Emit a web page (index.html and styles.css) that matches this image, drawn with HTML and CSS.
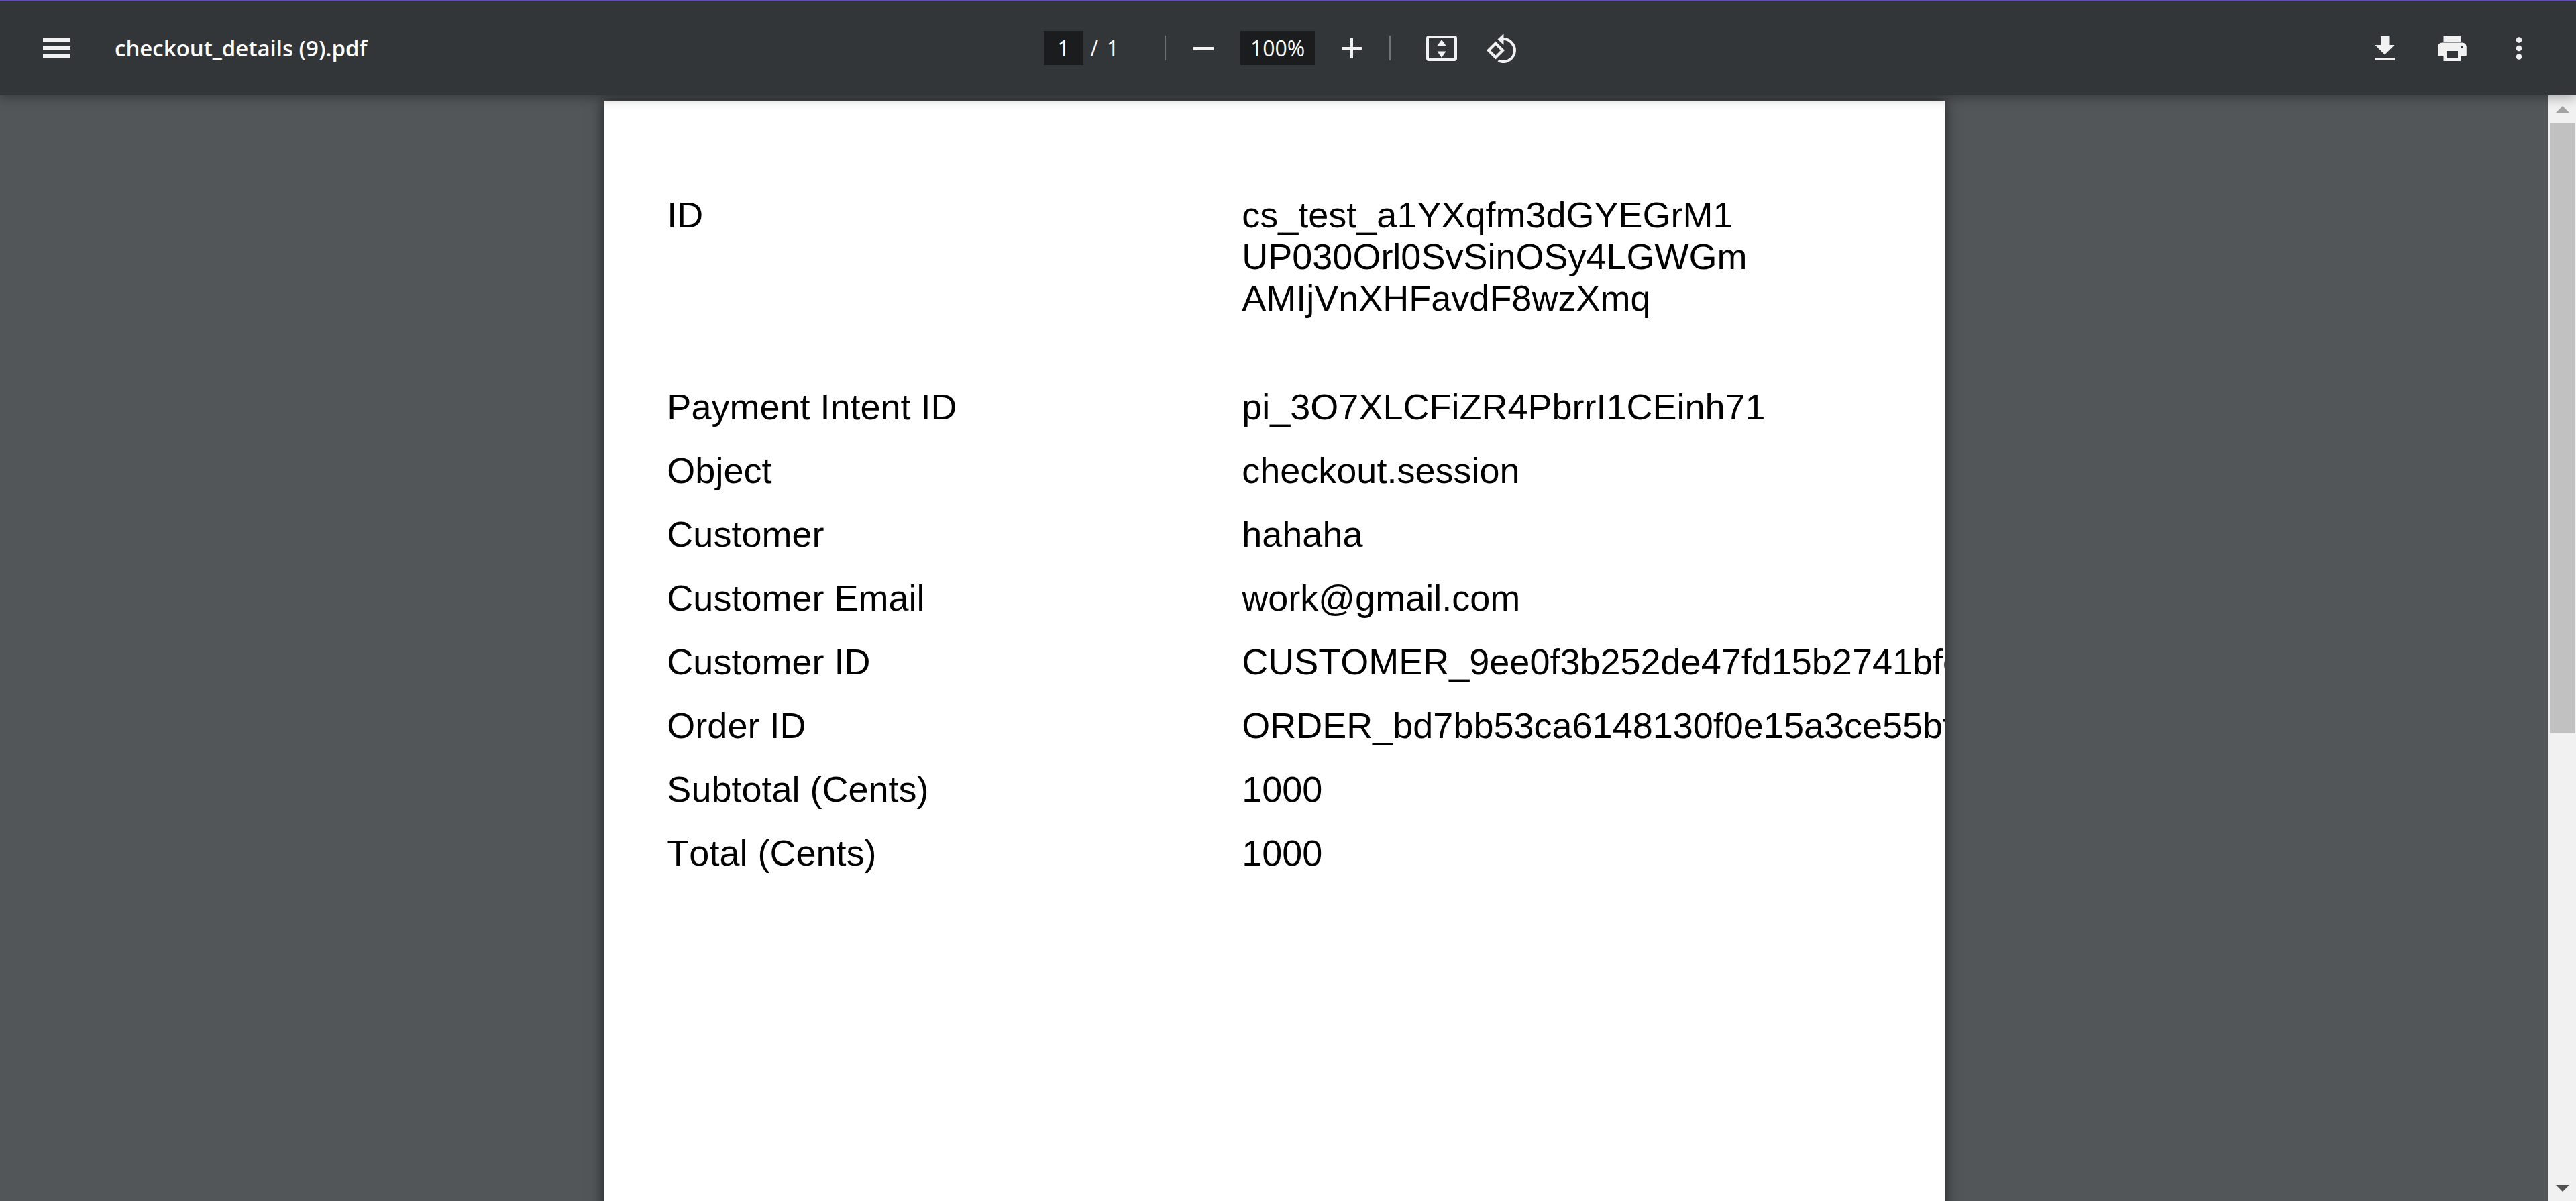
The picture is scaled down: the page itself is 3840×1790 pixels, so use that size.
FILE: index.html
```html
<!DOCTYPE html>
<html lang="en">
<head>
<meta charset="utf-8">
<title>checkout_details (9).pdf</title>
<link rel="stylesheet" href="styles.css">
</head>
<body>
<header class="toolbar">
  <div class="toolbar-start">
    <button class="icon-button" type="button" aria-label="Menu">
      <svg width="42" height="32" viewBox="0 0 42 32"><path d="M0 0h41v6H0zM0 13h41v5H0zM0 25h41v6H0z"/></svg>
    </button>
    <h1 class="title">checkout_details (9).pdf</h1>
  </div>
  <div class="toolbar-center">
    <input class="field page-field" type="text" value="1" aria-label="Page number">
    <span class="slash">/</span>
    <span class="page-count">1</span>
    <span class="separator"></span>
    <button class="icon-button" type="button" aria-label="Zoom out">
      <svg width="30" height="30" viewBox="0 0 30 30"><path d="M0 13h30v5H0z"/></svg>
    </button>
    <input class="field zoom-field" type="text" value="100%" aria-label="Zoom level">
    <button class="icon-button" type="button" aria-label="Zoom in">
      <svg width="30" height="30" viewBox="0 0 30 30"><path d="M13 0h4v13h13v4H17v13h-4V17H0v-4h13z"/></svg>
    </button>
    <span class="separator"></span>
    <button class="icon-button fit-button" type="button" aria-label="Fit to page">
      <svg width="46" height="38" viewBox="0 0 46 38"><path fill-rule="evenodd" d="M4 0h38a4 4 0 0 1 4 4v30a4 4 0 0 1-4 4H4a4 4 0 0 1-4-4V4a4 4 0 0 1 4-4zm0 4v30h38V4zM23 6l6.500 9h-13zM23 33l-6.500-9.500h13z"/></svg>
    </button>
    <button class="icon-button" type="button" aria-label="Rotate counterclockwise">
      <svg width="44" height="44" viewBox="0 0 44 44"><path d="M13.500 11.500L27 25 13.500 38.500 0 25zm0 6L6 25l7.500 7.500L21 25z" fill-rule="evenodd"/><path d="M25.500 0v17L16.500 8.500z"/><path class="arc" d="M25 8a17 17 0 1 1-7.500 32.300"/></svg>
    </button>
  </div>
  <div class="toolbar-end">
    <button class="icon-button" type="button" aria-label="Download">
      <svg width="30" height="36" viewBox="0 0 30 36"><path d="M9 0h12.500v13H29.500L15 27.500.500 13H9zM0 32h30v4H0z"/></svg>
    </button>
    <button class="icon-button" type="button" aria-label="Print">
      <svg width="43" height="38" viewBox="0 0 43 38"><path fill-rule="evenodd" d="M8.500 0H34v9H8.500zM6.500 10.500h30a6.300 6.300 0 0 1 6.300 6.300V30H34v8H8.500v-8H0V16.800a6.300 6.300 0 0 1 6.500-6.300zM13 23v11h17V23zM36 15a2.100 2.100 0 1 0 0 4.200 2.100 2.100 0 0 0 0-4.200z"/></svg>
    </button>
    <button class="icon-button" type="button" aria-label="More actions">
      <svg width="10" height="34" viewBox="0 0 10 34"><circle cx="5" cy="4.500" r="4.300"/><circle cx="5" cy="17" r="4.300"/><circle cx="5" cy="29.500" r="4.300"/></svg>
    </button>
  </div>
</header>
<div class="viewer">
  <main class="canvas">
    <article class="page">
      <table class="details">
        <tbody>
          <tr class="tall"><th scope="row">ID</th><td>cs_test_a1YXqfm3dGYEGrM1<br>UP030Orl0SvSinOSy4LGWGm<br>AMIjVnXHFavdF8wzXmq</td></tr>
          <tr><th scope="row">Payment Intent ID</th><td>pi_3O7XLCFiZR4PbrrI1CEinh71</td></tr>
          <tr><th scope="row">Object</th><td>checkout.session</td></tr>
          <tr><th scope="row">Customer</th><td>hahaha</td></tr>
          <tr><th scope="row">Customer Email</th><td>work@gmail.com</td></tr>
          <tr><th scope="row">Customer ID</th><td>CUSTOMER_9ee0f3b252de47fd15b2741bfe</td></tr>
          <tr><th scope="row">Order ID</th><td>ORDER_bd7bb53ca6148130f0e15a3ce55bf</td></tr>
          <tr><th scope="row">Subtotal (Cents)</th><td>1000</td></tr>
          <tr><th scope="row">Total (Cents)</th><td>1000</td></tr>
        </tbody>
      </table>
    </article>
  </main>
  <div class="scrollbar">
    <span class="arrow"><svg width="20" height="10" viewBox="0 0 20 10"><path fill="#a3a3a3" d="M10 0l10 10H0z"/></svg></span>
    <div class="track"><div class="thumb"></div></div>
    <span class="arrow"><svg width="20" height="10" viewBox="0 0 20 10"><path fill="#505050" d="M0 0h20L10 10z"/></svg></span>
  </div>
</div>
</body>
</html>
```
FILE: styles.css
```css
* {
  box-sizing: border-box;
}

body {
  margin: 0;
  height: 100vh;
  display: flex;
  flex-direction: column;
  overflow: hidden;
  background: #525659;
  font-family: "Open Sans", "Noto Sans", sans-serif;
}

/* Toolbar */
.toolbar {
  position: relative;
  z-index: 1;
  display: grid;
  grid-template-columns: 1fr auto 1fr;
  align-items: center;
  height: 142px;
  padding: 0 45px;
  border-top: 1px solid #6750b4;
  background: #323639;
  color: #fff;
  font-size: 32px;
  line-height: 50px;
  box-shadow: 0 4px 16px rgba(0, 0, 0, 0.3);
}

.toolbar-start,
.toolbar-center,
.toolbar-end {
  display: flex;
  align-items: center;
}

.toolbar-start {
  gap: 46px;
}

.toolbar-center {
  padding-right: 6px;
}

.toolbar-end {
  justify-content: flex-end;
  gap: 20px;
}

.title {
  margin: 0;
  font-size: 33px;
  font-weight: 600;
}

.icon-button {
  display: flex;
  align-items: center;
  justify-content: center;
  width: 80px;
  height: 80px;
  padding: 0;
  border: 0;
  background: none;
}

.icon-button svg {
  fill: #f1f1f1;
}

.icon-button .arc {
  fill: none;
  stroke: #f1f1f1;
  stroke-width: 4;
}

.field {
  height: 51px;
  padding: 0;
  border: 0;
  background: #1b1c1e;
  color: #fff;
  font: inherit;
  text-align: center;
}

.page-field {
  width: 59px;
}

.zoom-field {
  width: 111px;
  margin: 0 15px;
}

.slash {
  width: 32px;
  text-align: center;
}

.page-count {
  width: 40px;
  text-align: center;
}

.separator {
  width: 2px;
  height: 37px;
  margin: 0 16px;
  background: #707375;
}

.slash + .page-count {
  width: 24px;
}

.page-count + .separator {
  margin-left: 65px;
}

.fit-button {
  margin: 0 9px 0 20px;
}

/* Document */
.viewer {
  flex: 1;
  min-height: 0;
  display: flex;
}

.canvas {
  flex: 1;
  overflow: hidden;
  padding-top: 8px;
}

.page {
  width: 52.6%;
  margin: 0 auto;
  padding: 123px 0 0 94px;
  aspect-ratio: 210 / 297;
  overflow: hidden;
  background: #fff;
  box-shadow: 0 0 20px rgba(0, 0, 0, 0.6);
}

.details {
  width: 100%;
  table-layout: fixed;
  border-collapse: collapse;
  color: #000;
  font: 54px/62px "Liberation Sans", Arial, sans-serif;
  font-kerning: none;
  white-space: nowrap;
}

.details tr {
  height: 95px;
}

.details .tall {
  height: 286px;
}

.details th,
.details td {
  padding: 16px 0 0;
  font-weight: 400;
  text-align: left;
  vertical-align: top;
}

.details th {
  width: 45%;
}

/* Scrollbar */
.scrollbar {
  display: flex;
  flex-direction: column;
  width: 41px;
  background: #f1f1f1;
}

.arrow {
  display: flex;
  align-items: center;
  justify-content: center;
  height: 42px;
}

.arrow:last-child {
  height: 38px;
}

.track {
  flex: 1;
  padding: 0 1px 0 2px;
}

.thumb {
  height: 58%;
  background: #c1c1c1;
}
```
